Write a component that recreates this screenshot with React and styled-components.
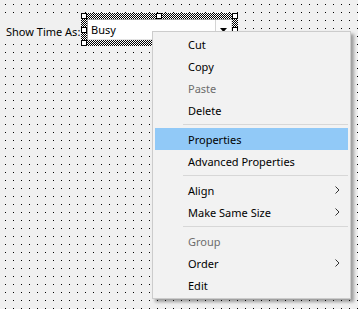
import React from "react";
import styled, { createGlobalStyle } from "styled-components";

const Global = createGlobalStyle`
  html, body { margin: 0; padding: 0; background: #f0f0f0; }
  body { font-family: "Noto Sans", "DejaVu Sans", sans-serif; font-size: 11px; color: #000; }
`;

const Canvas = styled.div`
  position: relative;
  width: 358px;
  height: 309px;
  overflow: hidden;
  background-color: #f0f0f0;
  background-image: conic-gradient(at 1px 1px, transparent 75%, #000 0);
  background-size: 8px 8px;
  background-position: 5px 4px;
`;

const FormRow = styled.div`
  display: flex;
  align-items: flex-start;
  padding-top: 13px;
`;

const Label = styled.span`
  display: flex;
  align-items: center;
  box-sizing: border-box;
  width: 81px;
  height: 26px;
  margin-top: 5px;
  padding-left: 6px;
  font-size: 11px;
  background: #f0f0f0;
  white-space: nowrap;
`;

const Selection = styled.div`
  position: relative;
  padding: 6px;
  background-color: #fff;
  background-image: conic-gradient(#000 25%, #fff 0 50%, #000 0 75%, #fff 0);
  background-size: 2px 2px;
`;

const Handle = styled.span`
  position: absolute;
  width: 6px;
  height: 6px;
  box-sizing: border-box;
  border: 1px solid #000;
  background: #fff;
  left: ${(p) => p.$x};
  top: ${(p) => p.$y};
`;

const Combo = styled.div`
  width: 145px;
  height: 21px;
  box-sizing: border-box;
  display: flex;
  align-items: stretch;
  background: #fff;
  border-top: 1px solid #a0a0a0;
  border-left: 1px solid #a0a0a0;
  border-right: 1px solid #e3e3e3;
  border-bottom: 1px solid #e3e3e3;
`;

const ComboText = styled.span`
  flex: 1;
  padding-left: 3px;
  line-height: 19px;
  font-size: 11px;
`;

const DropButton = styled.span`
  width: 15px;
  display: flex;
  align-items: center;
  justify-content: center;
  border-left: 1px solid #d4d4d4;
  background: #fdfdfd;
`;

const Menu = styled.div`
  position: absolute;
  left: 152px;
  top: 31px;
  width: 199px;
  box-sizing: border-box;
  padding: 1px 2px 2px;
  background: #f2f2f2;
  border: 1px solid #cccccc;
  box-shadow: 3px 3px 3px rgba(0, 0, 0, 0.35);
`;

const Item = styled.div`
  display: flex;
  align-items: center;
  height: 22px;
  padding: 0 8px 0 33px;
  font-size: 11px;
  color: ${(p) => (p.$disabled ? "#6d6d6d" : "#000")};
  background: ${(p) => (p.$active ? "#91c9f7" : "transparent")};
`;

const ItemText = styled.span`
  flex: 1;
`;

const Separator = styled.div`
  height: 1px;
  margin: 3px 0 3px 28px;
  background: #d7d7d7;
`;

const Chevron = () => (
  <svg width="5" height="8" viewBox="0 0 5 8">
    <polyline points="0.5,0.5 4,4 0.5,7.5" fill="none" stroke="#333" strokeWidth="1" />
  </svg>
);

const items = [
  { t: "Cut" },
  { t: "Copy" },
  { t: "Paste", disabled: true },
  { t: "Delete" },
  { sep: true },
  { t: "Properties", active: true },
  { t: "Advanced Properties" },
  { sep: true },
  { t: "Align", sub: true },
  { t: "Make Same Size", sub: true },
  { sep: true },
  { t: "Group", disabled: true },
  { t: "Order", sub: true },
  { t: "Edit" },
];

export default function App() {
  return (
    <>
      <Global />
      <Canvas>
        <FormRow>
          <Label>Show Time As:</Label>
          <Selection>
            <Combo>
              <ComboText>Busy</ComboText>
              <DropButton>
                <svg width="7" height="4" viewBox="0 0 7 4">
                  <polygon points="0,0 7,0 3.5,4" fill="#000" />
                </svg>
              </DropButton>
            </Combo>
            <Handle $x="0px" $y="0px" />
            <Handle $x="75px" $y="0px" />
            <Handle $x="151px" $y="0px" />
            <Handle $x="0px" $y="14px" />
            <Handle $x="151px" $y="14px" />
            <Handle $x="0px" $y="27px" />
            <Handle $x="75px" $y="27px" />
            <Handle $x="151px" $y="27px" />
          </Selection>
        </FormRow>
        <Menu>
          {items.map((it, i) =>
            it.sep ? (
              <Separator key={i} />
            ) : (
              <Item key={i} $disabled={it.disabled} $active={it.active}>
                <ItemText>{it.t}</ItemText>
                {it.sub && <Chevron />}
              </Item>
            )
          )}
        </Menu>
      </Canvas>
    </>
  );
}
